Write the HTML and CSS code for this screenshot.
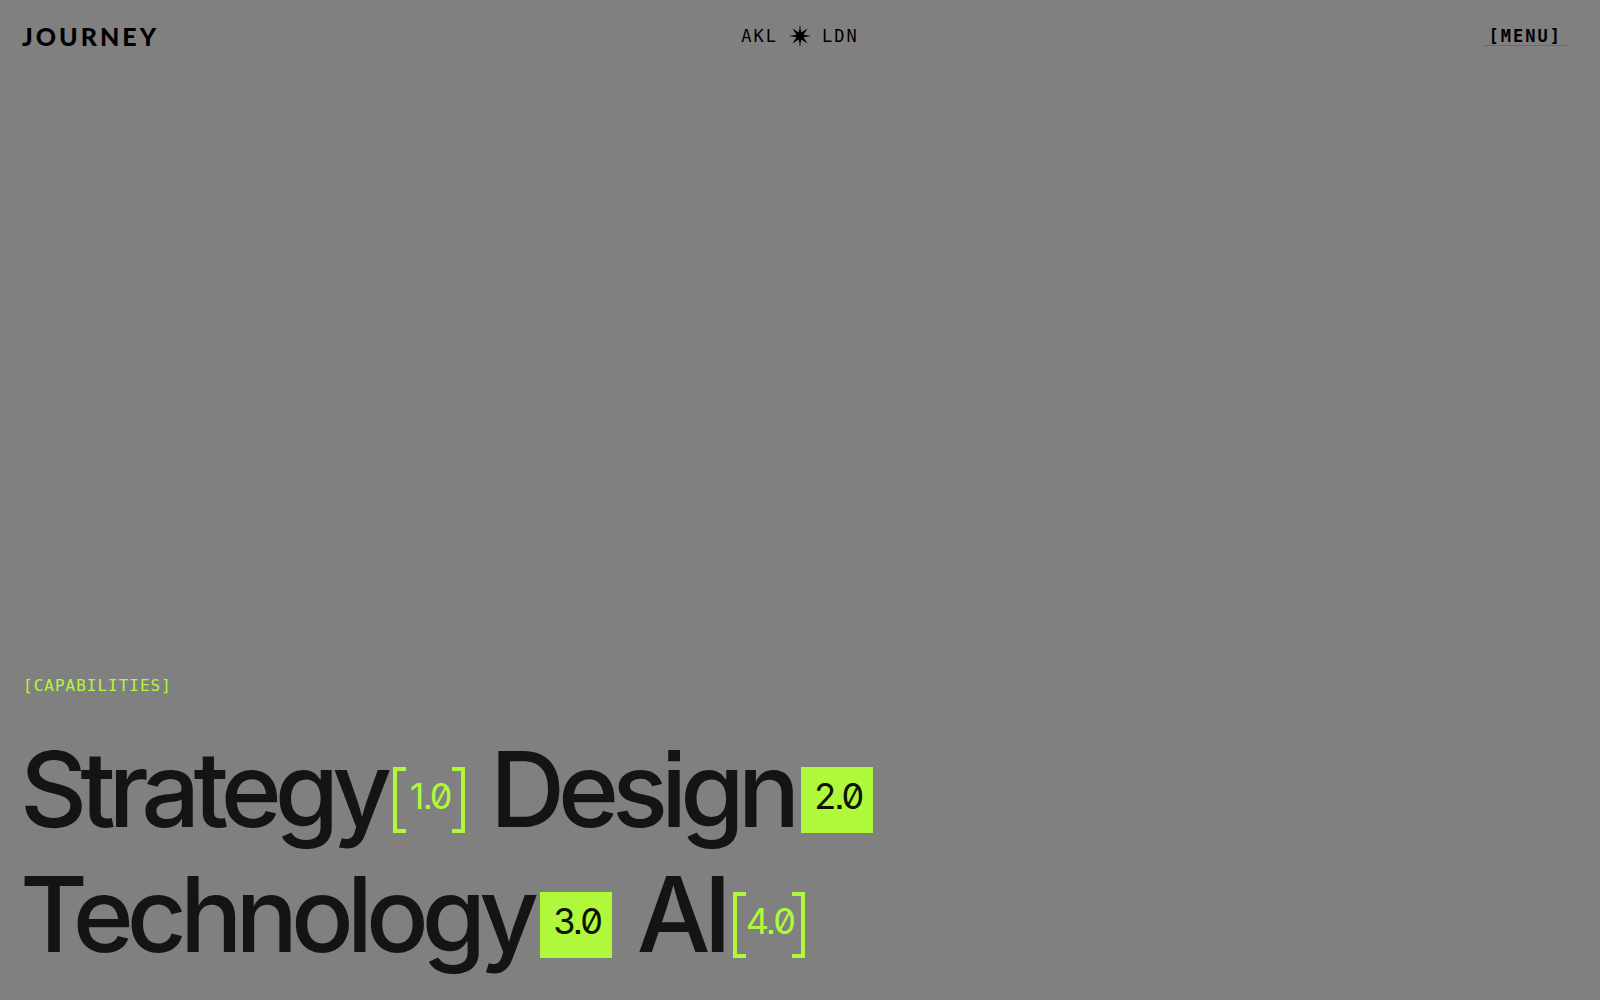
FILE: index.html
```html
<!DOCTYPE html>
<html lang="en">
<head>
    <meta charset="UTF-8">
    <meta name="viewport" content="width=device-width, initial-scale=1.0">
    <title>Journey</title>
    <link rel="stylesheet" href="styles.css">
</head>
<body>
    <header class="header">
        <a class="logo" href="#">JOURNEY</a>
        <div class="locations">
            <span>AKL</span>
            <svg class="star" viewBox="0 0 24 24" aria-hidden="true">
                <path d="M12 0.8L13.2 8.6L19.6 4.4L15.4 10.8L23.2 12L15.4 13.2L19.6 19.6L13.2 15.4L12 23.2L10.8 15.4L4.4 19.6L8.6 13.2L0.8 12L8.6 10.8L4.4 4.4L10.8 8.6Z"/>
            </svg>
            <span>LDN</span>
        </div>
        <button class="menu-btn" type="button">[MENU]</button>
    </header>
    <main class="hero">
        <p class="eyebrow">[CAPABILITIES]</p>
        <h1 class="capabilities">
            <a href="#">Strategy<span class="badge outline">1.0</span></a>
            <a href="#">Design<span class="badge solid">2.0</span></a>
            <a href="#">Technology<span class="badge solid">3.0</span></a>
            <a href="#">AI<span class="badge outline">4.0</span></a>
        </h1>
    </main>
</body>
</html>
```
FILE: styles.css
```css
* {
    box-sizing: border-box;
}

body {
    display: flex;
    flex-direction: column;
    min-height: 100vh;
    margin: 0;
    background: #808080;
    color: #000;
    font-family: Inter, "Liberation Sans", sans-serif;
}

a {
    color: inherit;
    text-decoration: none;
}

.header {
    display: grid;
    grid-template-columns: 1fr auto 1fr;
    align-items: center;
    height: 72px;
    padding: 0 22px;
}

.logo {
    justify-self: start;
    font-family: Lato, sans-serif;
    font-size: 25px;
    font-weight: 900;
    line-height: 28px;
    letter-spacing: 3px;
}

.locations {
    display: flex;
    align-items: center;
    gap: 10px;
    font-family: "DejaVu Sans Mono", monospace;
    font-size: 17px;
    letter-spacing: 2px;
}

.star {
    width: 24px;
    height: 24px;
}

.menu-btn {
    justify-self: end;
    margin-right: 10px;
    padding: 0 6px;
    border: 0;
    border-bottom: 1px solid #6c6c6c;
    background: none;
    color: #000;
    font-family: "DejaVu Sans Mono", monospace;
    font-size: 17px;
    font-weight: 700;
    line-height: 18px;
    letter-spacing: 2px;
}

.hero {
    margin-top: auto;
    padding: 0 20px 23px;
}

.eyebrow {
    margin: 0 0 31px;
    padding-left: 3px;
    color: #b0f83c;
    font-family: "DejaVu Sans Mono", monospace;
    font-size: 16px;
    line-height: 20px;
    letter-spacing: 1px;
}

.capabilities {
    max-width: 960px;
    margin: 0;
    color: #141414;
    font-size: 104px;
    font-weight: 450;
    line-height: 125px;
    letter-spacing: -7px;
    font-feature-settings: "ss07";
}

.capabilities a {
    white-space: nowrap;
}

.badge {
    position: relative;
    display: inline-flex;
    justify-content: center;
    align-items: center;
    width: 72px;
    height: 66px;
    margin: 0 4px 0 8px;
    padding: 0 0 8px 2px;
    vertical-align: 18px;
    font-size: 36px;
    font-weight: 400;
    line-height: 40px;
    letter-spacing: -2px;
    font-feature-settings: "zero", "ss07";
}

.solid {
    background: #b0f83c;
    color: #0c1400;
}

.outline {
    color: #b0f83c;
}

/* square brackets around the number */
.outline::before,
.outline::after {
    content: "";
    position: absolute;
    top: 0;
    bottom: 0;
    width: 9px;
    border: 4px solid #b0f83c;
}

.outline::before {
    left: 0;
    border-right: 0;
}

.outline::after {
    right: 0;
    border-left: 0;
}
```
